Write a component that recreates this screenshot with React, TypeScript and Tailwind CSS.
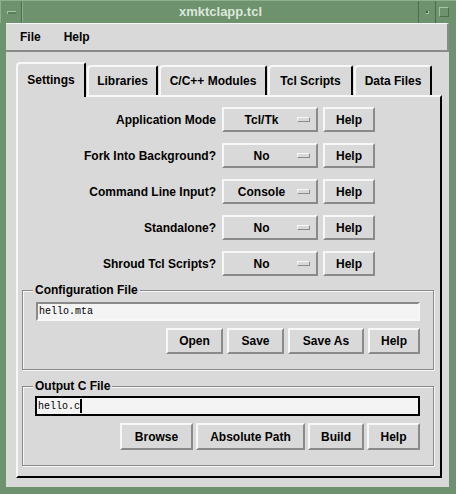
import React from "react";

const raised =
  "border-2 border-t-[#f7f7f7] border-l-[#f7f7f7] border-r-[#8a8a8a] border-b-[#8a8a8a]";

const settings = [
  { label: "Application Mode", value: "Tcl/Tk" },
  { label: "Fork Into Background?", value: "No" },
  { label: "Command Line Input?", value: "Console" },
  { label: "Standalone?", value: "No" },
  { label: "Shroud Tcl Scripts?", value: "No" },
];

function Btn({ label, className }: { label: string; className: string }) {
  return (
    <button
      type="button"
      className={`${raised} ${className} bg-[#d9d9d9] flex items-center justify-center text-[12px] font-bold text-black leading-none`}
    >
      {label}
    </button>
  );
}

function Tab({ label, className, active }: { label: string; className: string; active?: boolean }) {
  return (
    <div
      className={
        active
          ? `${className} relative z-10 -mb-[2px] h-[35px] pt-[9px] bg-[#d9d9d9] border-t-2 border-l-2 border-r-2 border-t-[#f7f7f7] border-l-[#f7f7f7] border-r-black rounded-tl-[4px] rounded-tr-[2px] text-center text-[12px] font-bold leading-[14px]`
          : `${className} h-[30px] pt-[7px] bg-[#d9d9d9] border-t-2 border-l-2 border-r-2 border-t-[#f7f7f7] border-l-[#f7f7f7] border-r-black rounded-tl-[4px] rounded-tr-[2px] text-center text-[12px] font-bold leading-[14px]`
      }
    >
      {label}
    </div>
  );
}

function Group({ title, className, children }: { title: string; className: string; children: React.ReactNode }) {
  return (
    <div
      className={`${className} relative mx-[4px] mr-[6px] border border-[#8a8a8a] shadow-[inset_1px_1px_0_#f7f7f7,1px_1px_0_#f7f7f7] px-[13px]`}
    >
      <span className="absolute left-[10px] -top-[8px] px-[2px] bg-[#d9d9d9] text-[12px] font-bold leading-[14px]">
        {title}
      </span>
      {children}
    </div>
  );
}

export default function App() {
  return (
    <div className="w-[456px] h-[494px] bg-[#6e916e] flex flex-col font-['Liberation_Sans',Arial,sans-serif] text-black select-none">
      {/* title bar */}
      <div className="h-[23px] flex border-t border-t-[#8fb08f]">
        <div className="w-[22px] border-r border-r-[#4c6c4c] border-l border-l-[#8fb08f] flex items-center justify-center">
          <div className="w-[9px] h-[3px] border-t border-l border-t-[#a8c4a8] border-l-[#a8c4a8] bg-[#5a7d5a]" />
        </div>
        <div className="flex-1 flex items-center justify-center border-l border-l-[#8fb08f] text-[13px] font-bold text-[#dae8da]">
          xmktclapp.tcl
        </div>
        <div className="w-[17px] border-l border-l-[#4c6c4c] flex items-center justify-center">
          <div className="w-[3px] h-[3px] bg-[#3f5f3f] border-b border-r border-b-[#a8c4a8] border-r-[#a8c4a8]" />
        </div>
        <div className="w-[17px] mr-[4px] border-l border-l-[#4c6c4c] flex items-center justify-center">
          <div className="w-[10px] h-[10px] border border-t-[#a8c4a8] border-l-[#a8c4a8] border-r-[#4c6c4c] border-b-[#4c6c4c]" />
        </div>
      </div>

      {/* client */}
      <div className="flex-1 ml-[6px] mr-[7px] mb-[7px] bg-[#d9d9d9] flex flex-col">
        {/* menubar */}
        <div className="h-[29px] flex items-center gap-[23px] pl-[14px] border-t border-t-[#f7f7f7] border-b-2 border-b-[#8a8a8a] border-r-2 border-r-[#8a8a8a] text-[12px] font-bold">
          <span>File</span>
          <span>Help</span>
        </div>

        {/* tabs */}
        <div className="mt-[10px] ml-[10px] flex items-end">
          <Tab label="Settings" className="w-[70px]" active />
          <Tab label="Libraries" className="ml-[1px] w-[71px]" />
          <Tab label="C/C++ Modules" className="ml-[1px] w-[108px]" />
          <Tab label="Tcl Scripts" className="ml-[1px] w-[85px]" />
          <Tab label="Data Files" className="ml-[1px] w-[78px]" />
        </div>

        {/* panel */}
        <div className="ml-[10px] w-[426px] h-[383px] border-2 border-t-[#f7f7f7] border-l-[#f7f7f7] border-r-black border-b-black flex flex-col pt-[10px]">
          <div className="flex flex-col gap-[11px]">
            {settings.map((s) => (
              <div key={s.label} className="flex items-center h-[25px]">
                <div className="w-[198px] text-right text-[12px] font-bold">{s.label}</div>
                <div className={`${raised} ml-[6px] w-[96px] h-[25px] flex items-center`}>
                  <span className="flex-1 text-center text-[12px] font-bold pl-[2px]">{s.value}</span>
                  <span className="w-[13px] h-[5px] mr-[6px] border border-t-[#f7f7f7] border-l-[#f7f7f7] border-r-[#8a8a8a] border-b-[#8a8a8a]" />
                </div>
                <Btn label="Help" className="ml-[5px] w-[52px] h-[25px]" />
              </div>
            ))}
          </div>

          <Group title="Configuration File" className="mt-[14px] pt-[11px] pb-[15px]">
            <div className="h-[19px] border-2 border-t-[#8a8a8a] border-l-[#8a8a8a] border-r-[#f7f7f7] border-b-[#f7f7f7] bg-[#f4f4f4] flex items-center pl-[1px] font-['Liberation_Mono',monospace] text-[10px]">
              hello.mta
            </div>
            <div className="mt-[7px] flex justify-end gap-[4px]">
              <Btn label="Open" className="w-[57px] h-[26px]" />
              <Btn label="Save" className="w-[57px] h-[26px]" />
              <Btn label="Save As" className="w-[76px] h-[26px]" />
              <Btn label="Help" className="w-[52px] h-[26px]" />
            </div>
          </Group>

          <Group title="Output C File" className="mt-[16px] pt-[9px] pb-[15px]">
            <div className="h-[20px] -ml-[1px] border-2 border-black bg-[#f4f4f4] flex items-center pl-[1px] font-['Liberation_Mono',monospace] text-[10px]">
              hello.c
              <span className="w-[2px] h-[14px] bg-black" />
            </div>
            <div className="mt-[7px] flex justify-end gap-[3px]">
              <Btn label="Browse" className="w-[73px] h-[27px]" />
              <Btn label="Absolute Path" className="w-[109px] h-[27px]" />
              <Btn label="Build" className="w-[56px] h-[27px]" />
              <Btn label="Help" className="w-[53px] h-[27px]" />
            </div>
          </Group>
        </div>
      </div>
    </div>
  );
}
